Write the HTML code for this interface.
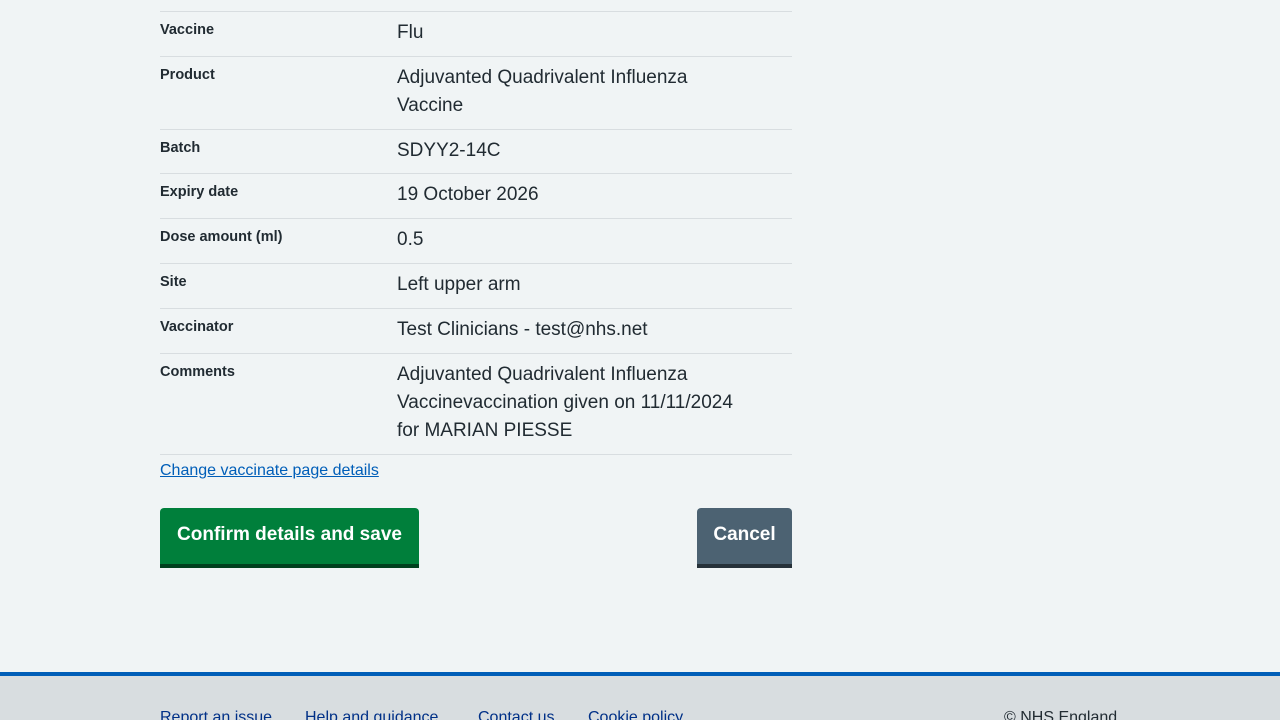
<!DOCTYPE html>
<html><head><meta charset="utf-8"><style>
*{margin:0;padding:0;box-sizing:border-box}
html,body{width:1280px;height:720px;overflow:hidden}
body{background:#f0f4f5;font-family:"Liberation Sans",sans-serif;color:#212b32;position:relative}
.line{position:absolute;left:160px;width:632px;height:1px;background:#d8dde0}
.k{position:absolute;left:160px;font-size:14.5px;font-weight:bold;line-height:20px}
.v{position:absolute;left:397px;width:360px;font-size:19px;line-height:28px}
a.l{position:absolute;left:160px;top:462px;font-size:16px;color:#005eb8;text-decoration:underline}
.btn{position:absolute;top:508px;height:56px;border-radius:4px 4px 0 0;color:#fff;font-weight:bold;font-size:19px;line-height:54px;text-align:center}
.foot{position:absolute;left:0;top:672px;width:1280px;height:48px;background:#d8dde0;border-top:4px solid #005eb8}
.fl{position:absolute;top:709px;font-size:16px;color:#003087}
</style></head><body>
<div class="line" style="top:11px"></div>
<div class="k" style="top:20px">Vaccine</div><div class="v" style="top:19px">Flu</div>
<div class="line" style="top:56px"></div>
<div class="k" style="top:65px">Product</div><div class="v" style="top:64px;width:330px">Adjuvanted Quadrivalent Influenza Vaccine</div>
<div class="line" style="top:129px"></div>
<div class="k" style="top:138px">Batch</div><div class="v" style="top:137px">SDYY2-14C</div>
<div class="line" style="top:173px"></div>
<div class="k" style="top:182px">Expiry date</div><div class="v" style="top:181px">19 October 2026</div>
<div class="line" style="top:218px"></div>
<div class="k" style="top:227px">Dose amount (ml)</div><div class="v" style="top:226px">0.5</div>
<div class="line" style="top:263px"></div>
<div class="k" style="top:272px">Site</div><div class="v" style="top:271px">Left upper arm</div>
<div class="line" style="top:308px"></div>
<div class="k" style="top:317px">Vaccinator</div><div class="v" style="top:316px">Test Clinicians - test@nhs.net</div>
<div class="line" style="top:353px"></div>
<div class="k" style="top:362px">Comments</div><div class="v" style="top:361px;width:360px">Adjuvanted Quadrivalent Influenza Vaccinevaccination given on 11/11/2024 for MARIAN PIESSE</div>
<div class="line" style="top:454px"></div>
<a class="l">Change vaccinate page details</a>
<div class="btn" style="left:160px;width:259px;background:#007f3b;box-shadow:0 4px 0 #00401e">Confirm details and save</div>
<div class="btn" style="left:697px;width:95px;background:#4c6272;box-shadow:0 4px 0 #263139">Cancel</div>
<div class="foot"></div>
<div class="fl" style="left:160px">Report an issue</div>
<div class="fl" style="left:305px">Help and guidance</div>
<div class="fl" style="left:478px">Contact us</div>
<div class="fl" style="left:588px">Cookie policy</div>
<div class="fl" style="left:1004px;color:#212b32">© NHS England</div>
</body></html>
